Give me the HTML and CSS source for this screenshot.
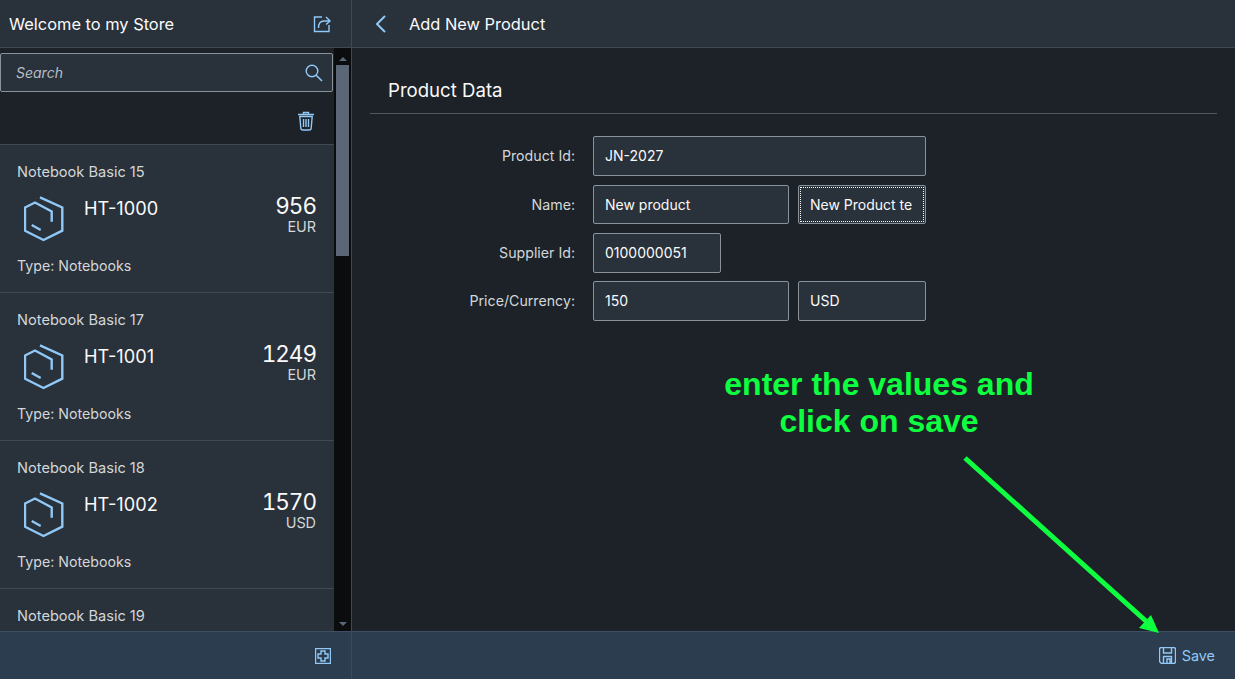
FILE: index.html
```html
<!DOCTYPE html>
<html lang="en">
<head>
    <meta charset="UTF-8">
    <meta name="viewport" content="width=device-width, initial-scale=1.0">
    <title>Add New Product</title>
    <link rel="stylesheet" href="styles.css">
</head>
<body>

<div class="app">
    <!-- master list -->
    <aside class="master">
        <header class="bar master-bar">
            <h1>Welcome to my Store</h1>
            <svg class="icon share" viewBox="0 0 20 20"><path d="M10 3H2.500v14.500H17V11M6.500 14c0-4.500 2-7 5.500-7h6M14 3l4 4-4 3.500"/></svg>
        </header>
        <div class="master-body">
            <div class="master-main">
                <div class="search">
                    <input type="text" placeholder="Search">
                    <svg class="icon search-icon" viewBox="0 0 18 18"><circle cx="7" cy="7" r="5.800"/><path d="M11.200 11.200l5.800 5.800" stroke-width="1.600"/></svg>
                </div>
                <div class="tools">
                    <svg class="icon trash" viewBox="0 0 18 20"><path d="M1 3.500h16M6.500 3V1.500h5V3M2.800 5.500l1 11.500q.1 2 2 2h6.400q1.900 0 2-2l1-11.500zM6.500 8v8M9 8v8M11.500 8v8"/></svg>
                </div>
                <div class="items">
                    <div class="item">
                        <div class="item-title">Notebook Basic 15</div>
                        <div class="item-main">
                            <svg class="icon product" viewBox="9 6 40 46"><path d="M25 7.300L47.300 17.500V40.700L28.500 50 10 40.700V17.500L20 12.500 36.700 21.500V31.700M16.700 35l9 5"/></svg>
                            <div class="item-id">HT-1000</div>
                            <div class="item-price">
                                <div class="num">956</div>
                                <div class="cur">EUR</div>
                            </div>
                        </div>
                        <div class="item-type">Type: Notebooks</div>
                    </div>
                    <div class="item">
                        <div class="item-title">Notebook Basic 17</div>
                        <div class="item-main">
                            <svg class="icon product" viewBox="9 6 40 46"><path d="M25 7.300L47.300 17.500V40.700L28.500 50 10 40.700V17.500L20 12.500 36.700 21.500V31.700M16.700 35l9 5"/></svg>
                            <div class="item-id">HT-1001</div>
                            <div class="item-price">
                                <div class="num">1249</div>
                                <div class="cur">EUR</div>
                            </div>
                        </div>
                        <div class="item-type">Type: Notebooks</div>
                    </div>
                    <div class="item">
                        <div class="item-title">Notebook Basic 18</div>
                        <div class="item-main">
                            <svg class="icon product" viewBox="9 6 40 46"><path d="M25 7.300L47.300 17.500V40.700L28.500 50 10 40.700V17.500L20 12.500 36.700 21.500V31.700M16.700 35l9 5"/></svg>
                            <div class="item-id">HT-1002</div>
                            <div class="item-price">
                                <div class="num">1570</div>
                                <div class="cur">USD</div>
                            </div>
                        </div>
                        <div class="item-type">Type: Notebooks</div>
                    </div>
                    <div class="item">
                        <div class="item-title">Notebook Basic 19</div>
                    </div>
                </div>
            </div>
            <div class="scrollbar">
                <span class="arrow-up"></span>
                <span class="thumb"></span>
                <span class="arrow-down"></span>
            </div>
        </div>
        <footer class="foot master-foot">
            <svg class="icon add" viewBox="0 0 16 16"><path d="M.5.500h15v15H.5zM6 3h4v3h3v4h-3v3H6v-3H3V6h3z"/></svg>
        </footer>
    </aside>

    <!-- detail page -->
    <main class="detail">
        <header class="bar detail-bar">
            <svg class="icon back" viewBox="0 0 12 20"><path d="M10 2L2 10l8 8" stroke-width="2"/></svg>
            <h2>Add New Product</h2>
        </header>
        <section class="detail-body">
            <h3>Product Data</h3>
            <form class="form">
                <label>Product Id:</label>
                <input class="wide" type="text" value="JN-2027">
                <label class="mid">Name:</label>
                <input class="mid" type="text" value="New product">
                <input class="mid focused" type="text" value="New Product te">
                <label>Supplier Id:</label>
                <input class="short" type="text" value="0100000051">
                <label>Price/Currency:</label>
                <input type="text" value="150">
                <input type="text" value="USD">
            </form>
        </section>
        <footer class="foot detail-foot">
            <svg class="icon save" viewBox="0 0 17 17"><path d="M.5 2.500q0-2 2-2h12q2 0 2 2v12q0 2-2 2h-12l-2-2zM4.500.500v5.500h8V.500M4.500 16.500V9.500h8v7M8 12h3v4.500H8z"/></svg>
            <span>Save</span>
        </footer>
    </main>
</div>

<!-- annotation drawn over the screenshot -->
<div class="note">enter the values and<br>click on save</div>
<svg class="note-arrow" viewBox="0 0 1235 679"><path d="M965 458L1147 622" stroke="#0dff3f" stroke-width="5" fill="none"/><path d="M1159 633L1139 628L1151 615z" fill="#0dff3f"/></svg>

</body>
</html>
```

FILE: styles.css
```css
* {
    box-sizing: border-box;
}
html, body {
    height: 100%;
}
body {
    margin: 0;
    overflow: hidden;
    background-color: #1c2228;
    color: #fafafa;
    font-family: 'Inter', sans-serif;
    font-size: 14px;
}
.app {
    display: flex;
    height: 679px;
}
.icon {
    display: block;
    fill: none;
    stroke: #91c8f6;
    stroke-width: 1.4;
}

/* bars */
.bar {
    display: flex;
    align-items: center;
    height: 48px;
    flex: none;
    background-color: #29313a;
    border-bottom: 1px solid #3f4954;
}
.bar h1, .bar h2 {
    margin: 0;
    font-size: 16.4px;
    font-weight: 400;
}
.foot {
    display: flex;
    align-items: center;
    justify-content: flex-end;
    height: 48px;
    flex: none;
    background-color: #2c3d4f;
    border-top: 1px solid #3d5063;
}

/* master */
.master {
    display: flex;
    flex-direction: column;
    width: 352px;
    flex: none;
    border-right: 1px solid #3f4954;
}
.master-bar {
    justify-content: space-between;
    padding: 0 19px 0 9px;
}
.share {
    width: 20px;
    height: 20px;
}
.master-body {
    display: flex;
    flex: 1;
    min-height: 0;
}
.master-main {
    display: flex;
    flex-direction: column;
    width: 334px;
    flex: none;
    min-height: 0;
}
.search {
    position: relative;
    margin-top: 5px;
    height: 39px;
    flex: none;
}
.search input {
    width: 333px;
    height: 39px;
    padding: 0 40px 0 15px;
    background-color: #29313a;
    border: 1px solid #89919a;
    border-radius: 2px;
    color: #fafafa;
    font: inherit;
}
.search input::placeholder {
    color: #b8bec5;
    font-style: italic;
    opacity: 1;
}
.search-icon {
    position: absolute;
    top: 11px;
    right: 11px;
    width: 18px;
    height: 18px;
}
.tools {
    display: flex;
    align-items: center;
    justify-content: flex-end;
    height: 53px;
    flex: none;
    padding: 5px 19px 0 0;
    background-color: #1c2228;
    border-bottom: 1px solid #3f4954;
}
.trash {
    width: 18px;
    height: 20px;
}
.items {
    flex: 1;
    min-height: 0;
    overflow: hidden;
    background-color: #29313a;
}
.item {
    height: 148px;
    padding: 18px 18px 0 17px;
    border-bottom: 1px solid #3f4954;
}
.item-title, .item-type {
    color: #d3d7d9;
    line-height: 18px;
}
.item-title {
    font-size: 14.6px;
}
.item-type {
    font-size: 14.2px;
}
.item-main {
    display: flex;
    height: 57px;
    margin-top: 13px;
}
.product {
    width: 40px;
    height: 46px;
    margin: 2px 0 0 7px;
    flex: none;
    stroke-width: 2.4;
}
.item-id {
    margin-left: 20px;
    padding-top: 2px;
    font-size: 18.2px;
    line-height: 24px;
    flex: 1;
}
.item-price {
    text-align: right;
}
.num {
    font-size: 22.5px;
    font-variant-numeric: tabular-nums;
    letter-spacing: -1px;
    line-height: 24px;
}
.cur {
    color: #d3d7d9;
    font-size: 14.4px;
    line-height: 18px;
}
.item-type {
    margin-top: 6px;
}
.scrollbar {
    display: flex;
    flex-direction: column;
    width: 17px;
    background-color: #0a0c0e;
    padding-left: 2px;
}
.arrow-up, .arrow-down {
    width: 0;
    height: 0;
    margin-left: 3px;
    border-left: 4px solid transparent;
    border-right: 4px solid transparent;
}
.arrow-up {
    margin-top: 9px;
    border-bottom: 4px solid #5b6776;
}
.arrow-down {
    margin-top: auto;
    margin-bottom: 5px;
    border-top: 4px solid #5b6776;
}
.thumb {
    width: 13px;
    height: 191px;
    margin-top: 4px;
    background-color: #5b6776;
}
.master-foot {
    padding-right: 20px;
}
.add {
    width: 16px;
    height: 16px;
}

/* detail */
.detail {
    display: flex;
    flex-direction: column;
    flex: 1;
    min-width: 0;
}
.detail-bar {
    padding-left: 23px;
}
.back {
    width: 12px;
    height: 20px;
    margin-right: 22px;
}
.detail-body {
    flex: 1;
    min-height: 0;
    padding: 18px 18px 0;
}
.detail-body h3 {
    margin: 0;
    height: 48px;
    padding: 11px 0 0 18px;
    font-size: 18.6px;
    font-weight: 400;
    line-height: 26px;
    border-bottom: 1px solid #4f5761;
}
.form {
    display: grid;
    grid-template-columns: 214px 196px 128px;
    grid-template-rows: 40px 41px 40px 40px;
    column-gap: 9px;
    row-gap: 8px;
    margin-top: 22px;
    align-items: center;
}
.form label {
    grid-column: 1;
    margin: 0 9px 2px 0;
    color: #d3d7d9;
    font-size: 14.2px;
    text-align: right;
}
.form label.mid {
    margin-bottom: 0;
}
.form input {
    width: 100%;
    height: 40px;
    padding: 0 10px 2px 11px;
    background-color: #29313a;
    border: 1px solid #89919a;
    border-radius: 2px;
    color: #fafafa;
    font: inherit;
}
.form .wide {
    grid-column: 2 / 4;
}
.form input.mid {
    height: 39px;
    padding-bottom: 0;
}
.form .short {
    grid-column: 2;
    width: 128px;
}
.form .focused {
    outline: 1px dotted #fff;
    outline-offset: -3px;
}
.detail-foot {
    padding-right: 20px;
    color: #91c8f6;
    font-size: 14.4px;
}
.save {
    width: 17px;
    height: 17px;
    margin-right: 6px;
}

/* annotation */
.note {
    position: absolute;
    left: 704px;
    top: 366px;
    width: 350px;
    color: #0dff3f;
    font-family: 'Liberation Sans', sans-serif;
    font-size: 32px;
    font-weight: 700;
    line-height: 37px;
    text-align: center;
}
.note-arrow {
    position: absolute;
    left: 0;
    top: 0;
    width: 1235px;
    height: 679px;
    pointer-events: none;
}
```
